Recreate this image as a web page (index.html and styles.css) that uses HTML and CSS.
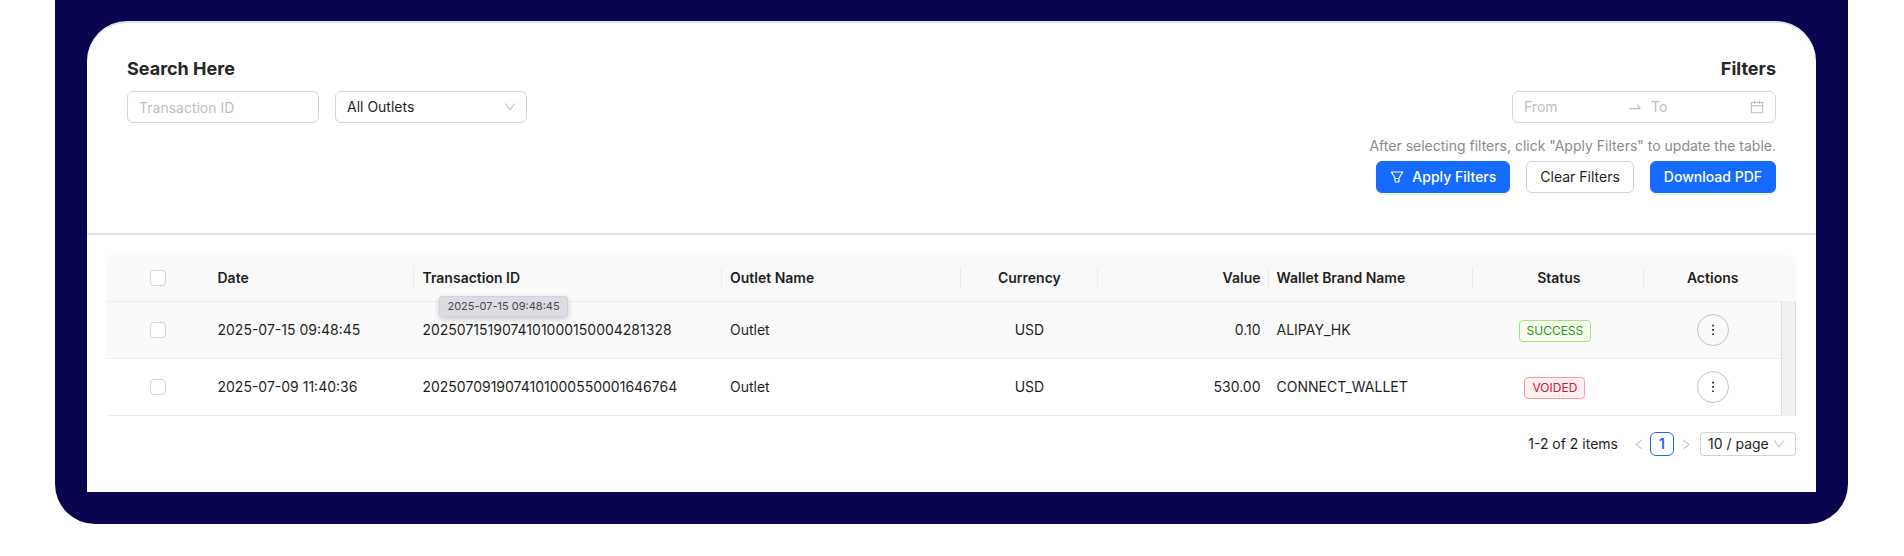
FILE: index.html
```html
<!DOCTYPE html>
<html lang="en">
<head>
<meta charset="utf-8">
<title>Transactions</title>
<link rel="stylesheet" href="styles.css">
</head>
<body>
<svg class="defs" aria-hidden="true">
  <symbol id="chevron" viewBox="64 64 896 896"><path fill="currentColor" d="M884 256h-75c-5.100 0-9.900 2.500-12.900 6.600L512 654.200 227.900 262.600c-3-4.100-7.800-6.600-12.900-6.600h-75c-6.500 0-10.300 7.400-6.500 12.700l352.600 486.100c12.800 17.600 39 17.600 51.700 0l352.600-486.100c3.900-5.300.1-12.700-6.400-12.700z"/></symbol>
  <symbol id="more" viewBox="0 0 14 14"><path fill="currentColor" d="M6.200 1.800h1.700v1.700H6.200zM6.200 6.100h1.700v1.700H6.200zM6.200 10.400h1.700v1.700H6.200z"/></symbol>
</svg>
<main class="shell">
  <section class="card">
    <header class="toolbar">
      <div class="search">
        <h2 class="heading">Search Here</h2>
        <div class="controls">
          <input class="field" type="text" placeholder="Transaction ID" aria-label="Transaction ID">
          <span class="select-box">
            <select class="field" aria-label="Outlet"><option>All Outlets</option></select>
            <svg class="chevron"><use href="#chevron"/></svg>
          </span>
        </div>
      </div>
      <div class="filters">
        <h2 class="heading">Filters</h2>
        <div class="range">
          <input class="range-input" type="text" placeholder="From" aria-label="From">
          <svg class="arrow" viewBox="0 0 1024 1024"><path fill="currentColor" d="M873.100 596.200l-164-208A32 32 0 00684 376h-64.800c-6.700 0-10.400 7.700-6.300 13l144.300 183H152c-4.400 0-8 3.600-8 8v60c0 4.400 3.600 8 8 8h695.900c26.800 0 41.700-30.800 25.200-51.800z"/></svg>
          <input class="range-input" type="text" placeholder="To" aria-label="To">
          <svg class="calendar" viewBox="64 64 896 896"><path fill="currentColor" d="M880 184H712v-64c0-4.400-3.600-8-8-8h-56c-4.400 0-8 3.600-8 8v64H384v-64c0-4.400-3.600-8-8-8h-56c-4.400 0-8 3.600-8 8v64H144c-17.700 0-32 14.300-32 32v664c0 17.700 14.300 32 32 32h736c17.700 0 32-14.300 32-32V216c0-17.700-14.300-32-32-32zm-40 656H184V460h656v380zM184 392V256h128v48c0 4.400 3.600 8 8 8h56c4.400 0 8-3.600 8-8v-48h256v48c0 4.400 3.600 8 8 8h56c4.400 0 8-3.600 8-8v-48h128v136H184z"/></svg>
        </div>
        <p class="hint">After selecting filters, click "Apply Filters" to update the table.</p>
        <div class="controls">
          <button class="btn primary" type="button"><svg class="funnel" viewBox="64 64 896 896"><path fill="currentColor" d="M880.100 154H143.900c-24.500 0-39.800 26.700-27.500 48L349 597.400V838c0 17.700 14.200 32 31.800 32h262.400c17.600 0 31.800-14.300 31.800-32V597.400L907.700 202c12.200-21.300-3.100-48-27.600-48zM603.400 798H420.600V642h182.900v156zm9.600-236.600l-9.500 16.600h-183l-9.500-16.600L212.700 226h598.600L613 561.400z"/></svg>Apply Filters</button>
          <button class="btn" type="button">Clear Filters</button>
          <button class="btn primary" type="button">Download PDF</button>
        </div>
      </div>
    </header>
    <div class="content">
      <div class="table-box">
        <table class="table">
          <colgroup><col class="w60"><col class="w120"><col class="w180"><col class="w140"><col class="w80"><col class="w100"><col class="w120"><col class="w100"><col class="w80"></colgroup>
          <thead>
            <tr>
              <th class="center"><input class="check" type="checkbox" aria-label="Select all"></th>
              <th class="split">Date</th>
              <th class="split">Transaction ID</th>
              <th class="split">Outlet Name</th>
              <th class="split center">Currency</th>
              <th class="split right">Value</th>
              <th class="split">Wallet Brand Name</th>
              <th class="split center">Status</th>
              <th class="center">Actions</th>
            </tr>
          </thead>
          <tbody>
            <tr class="hovered">
              <td class="center"><input class="check" type="checkbox" aria-label="Select row 1"></td>
              <td>2025-07-15 09:48:45</td>
              <td class="anchor">2025071519074101000150004281328<span class="tooltip" role="tooltip">2025-07-15 09:48:45</span></td>
              <td>Outlet</td>
              <td class="center">USD</td>
              <td class="right">0.10</td>
              <td>ALIPAY_HK</td>
              <td class="center"><span class="tag success">SUCCESS</span></td>
              <td class="center"><button class="more" type="button" aria-label="Actions"><svg class="dots"><use href="#more"/></svg></button></td>
            </tr>
            <tr>
              <td class="center"><input class="check" type="checkbox" aria-label="Select row 2"></td>
              <td>2025-07-09 11:40:36</td>
              <td>2025070919074101000550001646764</td>
              <td>Outlet</td>
              <td class="center">USD</td>
              <td class="right">530.00</td>
              <td>CONNECT_WALLET</td>
              <td class="center"><span class="tag voided">VOIDED</span></td>
              <td class="center"><button class="more" type="button" aria-label="Actions"><svg class="dots"><use href="#more"/></svg></button></td>
            </tr>
          </tbody>
        </table>
        <div class="scroll-track"></div>
      </div>
      <nav class="pagination" aria-label="Pagination">
        <span class="total">1-2 of 2 items</span>
        <button class="step" type="button" aria-label="Previous page" disabled><svg class="chevron turn-left"><use href="#chevron"/></svg></button>
        <button class="page" type="button" aria-current="page">1</button>
        <button class="step" type="button" aria-label="Next page" disabled><svg class="chevron turn-right"><use href="#chevron"/></svg></button>
        <span class="select-box small">
          <select class="field" aria-label="Page size"><option>10 / page</option></select>
          <svg class="chevron"><use href="#chevron"/></svg>
        </span>
      </nav>
    </div>
  </section>
</main>
</body>
</html>
```
FILE: styles.css
```css
* { box-sizing: border-box; }

body {
  margin: 0;
  background: #fff;
  color: #1f1f1f;
  font: 14px/22px Inter, "Liberation Sans", sans-serif;
}

input, select, button { font: inherit; color: inherit; }

.defs { display: none; }

.shell {
  margin: 0 56px 0 55px;
  padding: 21px 32px 32px;
  background: #09064f;
  border-radius: 0 0 40px 40px;
}

.card {
  background: #fff;
  border-top: 2px solid #e2e1ea;
  border-radius: 40px 40px 0 0;
}

.toolbar {
  display: flex;
  justify-content: space-between;
  padding: 32px 40px 40px;
  border-bottom: 2px solid #e2e1e8;
}

.heading {
  margin: 0 0 8px;
  font-size: 18px;
  line-height: 28px;
  font-weight: 700;
  color: #262626;
}

.controls { display: flex; gap: 16px; }

.field {
  width: 192px;
  height: 32px;
  padding: 0 11px;
  border: 1px solid #d4d4d4;
  border-radius: 6px;
  background: #fff;
  appearance: none;
}

::placeholder { color: #bfbfbf; opacity: 1; }

.select-box { display: grid; align-items: center; }
.select-box > * { grid-area: 1 / 1; }
.select-box > .chevron { justify-self: end; margin-right: 11px; pointer-events: none; }

.chevron { width: 12px; height: 12px; color: #bfbfbf; }
.turn-left { transform: rotate(90deg); }
.turn-right { transform: rotate(-90deg); }

.filters { display: flex; flex-direction: column; align-items: flex-end; }

.range {
  display: flex;
  align-items: center;
  width: 264px;
  height: 32px;
  padding: 0 11px;
  border: 1px solid #d4d4d4;
  border-radius: 6px;
  color: #bfbfbf;
}
.range-input { flex: 1; min-width: 0; padding: 0; border: 0; background: none; }
.arrow { width: 16px; height: 16px; margin: 0 8px; }
.calendar { width: 14px; height: 14px; margin-left: 4px; }

.hint { margin: 12px 0 4px; color: #8c8c8c; }

.btn {
  display: flex;
  align-items: center;
  gap: 8px;
  height: 32px;
  padding: 0 13px;
  border: 1px solid #d4d4d4;
  border-radius: 6px;
  background: #fff;
}
.btn.primary { border-color: #166bff; background: #166bff; color: #fff; font-weight: 500; box-shadow: 0 2px 0 #eaf4ff; }
.funnel { width: 14px; height: 14px; }

.content { padding: 20px 20px 36px; }

.table-box {
  display: flex;
  overflow: hidden;
  border-radius: 8px 8px 0 0;
  background: #fafafa;
}

.table {
  flex: 1;
  width: 100%;
  table-layout: fixed;
  border-collapse: separate;
  border-spacing: 0;
}
.w60 { width: 60px; }
.w80 { width: 80px; }
.w100 { width: 100px; }
.w120 { width: 120px; }
.w140 { width: 140px; }
.w180 { width: 180px; }

th, td {
  padding: 0 8px;
  border-bottom: 1px solid #ededed;
  text-align: left;
  white-space: nowrap;
}
th { height: 47px; font-weight: 600; }
td { height: 57px; background: #fff; }
.hovered td { background: #fafafa; }
.center { text-align: center; }
.right { text-align: right; }
.split {
  background: linear-gradient(#ededed, #ededed) right center / 1px 23px no-repeat;
}

.check {
  display: block;
  width: 16px;
  height: 16px;
  margin: 0 auto;
  border: 1px solid #d4d4d4;
  border-radius: 4px;
  background: #fff;
  appearance: none;
}

.anchor { position: relative; }
.tooltip {
  position: absolute;
  top: -6px;
  left: 25px;
  padding: 0 7px;
  border: 1px solid #d2cfd8;
  border-radius: 3px;
  background: #dedbe3;
  box-shadow: 0 2px 6px rgba(0, 0, 0, 0.2);
  color: #4a484d;
  font-size: 11px;
  line-height: 19px;
}

.tag {
  display: inline-block;
  margin-right: 8px;
  padding: 0 7px;
  border: 1px solid;
  border-radius: 4px;
  font-size: 12px;
  line-height: 20px;
}
.success { color: #2f8f1d; background: #f6ffed; border-color: #a5e37c; }
.voided { color: #cf1332; background: #fff0f0; border-color: #ff9a95; }

.more {
  display: grid;
  place-items: center;
  width: 32px;
  height: 32px;
  margin: 0 auto;
  padding: 0;
  border: 1px solid #c4c4c4;
  border-radius: 50%;
  background: none;
}
.dots { width: 14px; height: 14px; }

.scroll-track {
  width: 15px;
  margin-top: 46px;
  background: #f0f0f0;
  border: solid #dedede;
  border-width: 0 1px;
}

.pagination {
  display: flex;
  justify-content: flex-end;
  align-items: center;
  margin-top: 16px;
}
.total { margin-right: 8px; }
.step {
  display: grid;
  place-items: center;
  width: 24px;
  height: 24px;
  padding: 0;
  border: 0;
  background: none;
}
.step .chevron { width: 11px; height: 11px; }
.page {
  width: 24px;
  height: 24px;
  padding: 0;
  border: 1px solid #166bff;
  border-radius: 6px;
  background: #fff;
  color: #166bff;
  font-weight: 600;
}
.small { margin-left: 2px; }
.small .field { width: 96px; height: 24px; padding: 0 7px; border-radius: 4px; }
```
